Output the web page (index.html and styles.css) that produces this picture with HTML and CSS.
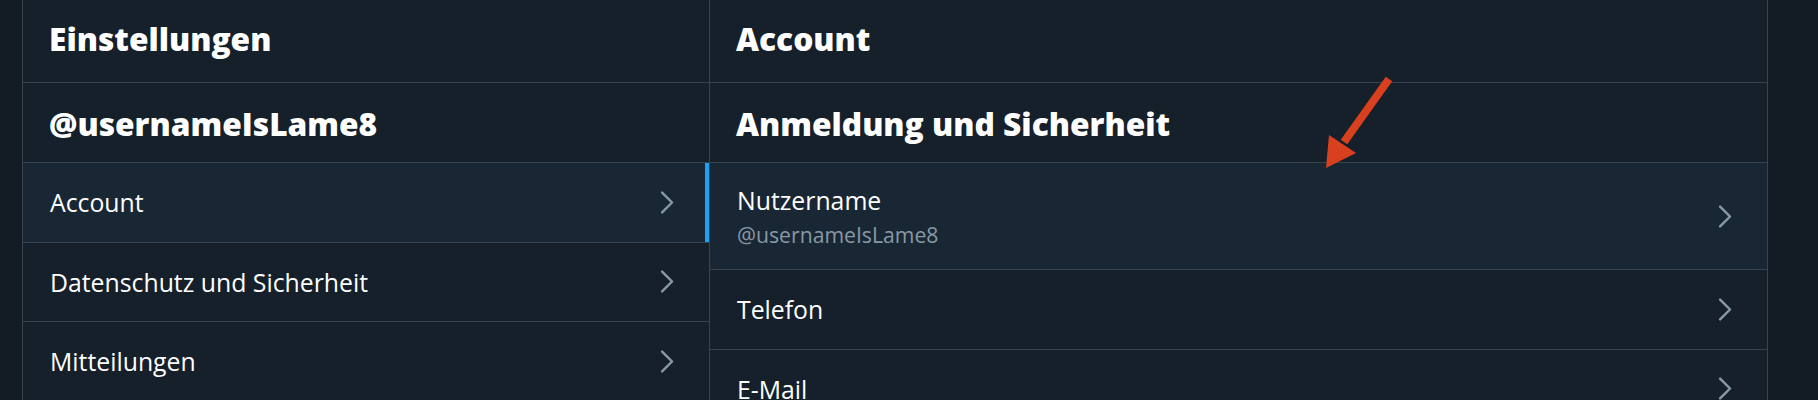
FILE: index.html
```html
<!DOCTYPE html>
<html lang="de">
<head>
<meta charset="utf-8">
<title>Einstellungen</title>
<link rel="stylesheet" href="styles.css">
</head>
<body>
<div class="app">
  <section class="col col-left">
    <header class="head"><h2 class="title">Einstellungen</h2></header>
    <div class="subhead"><h3 class="title">@usernameIsLame8</h3></div>
    <nav class="menu">
      <a class="row active">
        <span class="label">Account</span>
        <svg class="chev" viewBox="0 0 24 24"><polyline points="8.6,4.3 16.3,12 8.6,19.7"/></svg>
      </a>
      <a class="row">
        <span class="label">Datenschutz und Sicherheit</span>
        <svg class="chev" viewBox="0 0 24 24"><polyline points="8.6,4.3 16.3,12 8.6,19.7"/></svg>
      </a>
      <a class="row">
        <span class="label">Mitteilungen</span>
        <svg class="chev" viewBox="0 0 24 24"><polyline points="8.6,4.3 16.3,12 8.6,19.7"/></svg>
      </a>
    </nav>
  </section>
  <section class="col col-right">
    <header class="head"><h2 class="title">Account</h2></header>
    <div class="subhead"><h3 class="title">Anmeldung und Sicherheit</h3></div>
    <div class="menu">
      <a class="row row-tall hover">
        <span class="text">
          <span class="label">Nutzername</span>
          <span class="sub">@usernameIsLame8</span>
        </span>
        <svg class="chev" viewBox="0 0 24 24"><polyline points="8.6,4.3 16.3,12 8.6,19.7"/></svg>
      </a>
      <a class="row">
        <span class="label">Telefon</span>
        <svg class="chev" viewBox="0 0 24 24"><polyline points="8.6,4.3 16.3,12 8.6,19.7"/></svg>
      </a>
      <a class="row">
        <span class="label">E-Mail</span>
        <svg class="chev" viewBox="0 0 24 24"><polyline points="8.6,4.3 16.3,12 8.6,19.7"/></svg>
      </a>
    </div>
    <svg class="arrow" viewBox="0 0 100 110" width="100" height="110">
      <line x1="79" y1="9" x2="34" y2="72" />
      <polygon points="16,98 19,65 46,83" />
    </svg>
  </section>
</div>
</body>
</html>
```
FILE: styles.css
```css
html, body {
  margin: 0;
  padding: 0;
}
body {
  background: #131c25;
  font-family: "Open Sans", "Noto Sans", sans-serif;
  color: #ffffff;
  height: 400px;
  overflow: hidden;
}
.app {
  display: flex;
  margin-left: 22px;
  align-items: stretch;
  min-height: 400px;
}
.col {
  box-sizing: border-box;
  background: #15202b;
  border-right: 1px solid #38444d;
}
.col-left {
  width: 688px;
  border-left: 1px solid #38444d;
}
.col-right {
  width: 1058px;
  position: relative;
}
.head, .subhead {
  box-sizing: border-box;
  display: flex;
  align-items: center;
  padding: 0 26px;
  border-bottom: 1px solid #38444d;
}
.head {
  height: 83px;
  padding-bottom: 5px;
}
.subhead {
  height: 80px;
  padding-top: 3px;
}
.title {
  margin: 0;
  font-size: 31.7px;
  font-weight: 800;
  line-height: 40px;
  color: #ffffff;
}
.menu {
  display: flex;
  flex-direction: column;
}
.row {
  box-sizing: border-box;
  display: flex;
  align-items: center;
  justify-content: space-between;
  height: 79.5px;
  padding: 0 27px 0 27px;
  border-bottom: 1px solid #38444d;
  color: #ffffff;
  text-decoration: none;
}
.row-tall {
  height: 107px;
}
.active {
  background: #192734;
  box-shadow: inset -4px 0 0 #1da1f2;
}
.hover {
  background: #192734;
}
.label {
  font-size: 24.8px;
  line-height: 34px;
  color: #ffffff;
}
.text {
  display: flex;
  flex-direction: column;
}
.sub {
  font-size: 21.2px;
  line-height: 30px;
  margin-top: 3px;
  color: #8899a6;
}
.chev {
  width: 31px;
  height: 31px;
  flex: none;
  fill: none;
  stroke: #8899a6;
  stroke-width: 1.9;
  stroke-linecap: round;
  stroke-linejoin: round;
}
.arrow {
  position: absolute;
  left: 600px;
  top: 70px;
  overflow: visible;
}
.arrow line {
  stroke: #d8401e;
  stroke-width: 8;
}
.arrow polygon {
  fill: #d8401e;
}
```
